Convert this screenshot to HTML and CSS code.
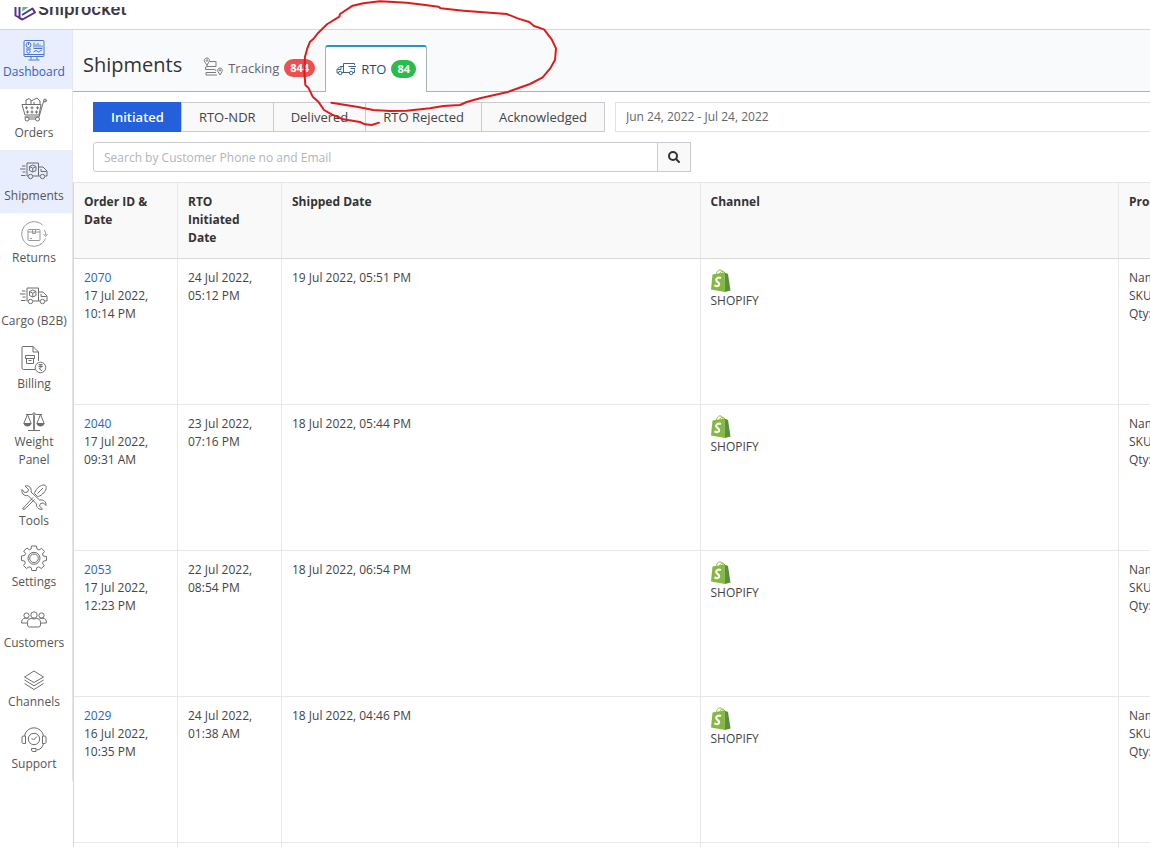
FILE: index.html
```html
<!DOCTYPE html>
<html lang="en">
<head>
    <meta charset="UTF-8">
    <meta name="viewport" content="width=device-width, initial-scale=1.0">
    <title>Shipments - RTO</title>
    <link rel="stylesheet" href="styles.css">
</head>
<body>

    <!-- shared icons -->
    <svg class="sprite" aria-hidden="true">
        <symbol id="icon-truck" viewBox="0 0 28 18">
            <path d="M8 14H7V1H18.500V14M13 14H20M18.500 5H23L27 9V14H25M21 7V9.500H26.500M2 4H5.500M0 7H5.500M2.500 10H5.500M1 13.500H5.500"/>
            <circle cx="10.500" cy="14.500" r="2.200"/>
            <circle cx="22.500" cy="14.500" r="2.200"/>
            <path d="M12.800 3L16 4.500V8.500L12.800 10L9.500 8.500V4.500ZM9.500 4.500L12.800 6.200L16 4.500M12.800 6.200V10"/>
        </symbol>
        <symbol id="icon-shopify" viewBox="0 0 20 23">
            <path d="M5 6C5.500 2.500 7.500 .8 9 .8C11 .8 12 3 12.200 5.500M8.500 6C8.700 3 10.500 1.800 12 2.200C13.200 2.500 13.700 3.500 13.800 5" fill="none" stroke="#95bf46" stroke-width="1"/>
            <path d="M1.500 5.500L13.500 3.500L14 23L0 20.500Z" fill="#84b840"/>
            <path d="M13.500 3.500L17 5L19.500 21.500L14 23Z" fill="#5c8f3b"/>
            <path d="M10 9C8 8 5.200 8.800 5.200 11C5.200 13.200 8.500 13.300 8.200 15.500C8 17.500 5 17.500 3.500 16.200" fill="none" stroke="#fff" stroke-width="2.200"/>
        </symbol>
    </svg>

    <header class="topbar">
        <a class="logo" href="#" aria-label="Shiprocket">
            <svg class="logo-mark" viewBox="0 0 24 14" width="24" height="14">
                <path d="M1.500 0V8.500L6 11M5.500 0V11L8.500 12.500L21 5.500L18.500 1.500L8 8" fill="none" stroke="#56318a" stroke-width="2" stroke-linejoin="round"/>
                <path d="M8.500 0H14.500L8 4.500Z" fill="#45c878"/>
            </svg>
            <span>Shiprocket</span>
        </a>
    </header>

    <div class="layout">
        <nav class="sidebar">
            <a class="nav-item active" href="#">
                <svg class="icon" viewBox="0 0 22 24" width="22" height="24">
                    <rect x="1" y="1.500" width="20" height="16" rx="1"/>
                    <path d="M1 15.500H21M8 17.500V20.500M14 17.500V20.500M5.500 21H16.500M11 3.500V8.500M13 5V8.500M15 4V8.500M17 5.500V8.500M19 6.500V8.500M10.500 9.500H19.500M10.500 13L13 11.500L15.500 13L19 11"/>
                    <circle cx="5.500" cy="6" r="2.500"/>
                    <circle cx="5.500" cy="12.500" r="1.700"/>
                    <path d="M3 10H8M5.500 6V3.500"/>
                </svg>
                <span>Dashboard</span>
            </a>
            <a class="nav-item" href="#">
                <svg class="icon" viewBox="0 1 26 26" width="26" height="26">
                    <path d="M1 7.500H20L18 18H4ZM26 3.500L22.500 4.500L18 20H3.500M5 7V3L8 1.500L10 3V7M10 4L16 1L19 4V7M13 5V7"/>
                    <path d="M4 10.800H7M5.500 9.300V12.300M9.500 10.800H12.500M11 9.300V12.300M15 10.800H18M16.500 9.300V12.300M5 15H8M6.500 13.500V16.500M9.500 15H12.500M11 13.500V16.500M14 15H17M15.500 13.500V16.500"/>
                    <circle cx="6" cy="22" r="2"/>
                    <circle cx="16.500" cy="22" r="2"/>
                    <circle cx="24" cy="3.500" r="1.400"/>
                    <path d="M8 22H14.500"/>
                </svg>
                <span>Orders</span>
            </a>
            <a class="nav-item current" href="#">
                <svg class="icon" viewBox="0 -3 28 28" width="28" height="28"><use href="#icon-truck" width="28" height="18"/></svg>
                <span>Shipments</span>
            </a>
            <a class="nav-item" href="#">
                <svg class="icon pale" viewBox="0 1 28 27" width="28" height="27">
                    <path d="M22.500 4A12.300 12.300 0 1 0 25.500 17.500M24.500 9A12 12 0 0 1 25.800 14M23.500 13L25.800 15.500L27.500 13M20 23.500L21 22.700"/>
                    <rect x="8" y="8.500" width="12" height="11" rx="1"/>
                    <path d="M8 11H20M12.500 8.500V12.500H15.500V8.500M10 17.500H12"/>
                </svg>
                <span>Returns</span>
            </a>
            <a class="nav-item" href="#">
                <svg class="icon" viewBox="0 -3 28 28" width="28" height="28"><use href="#icon-truck" width="28" height="18"/></svg>
                <span>Cargo (B2B)</span>
            </a>
            <a class="nav-item" href="#">
                <svg class="icon" viewBox="0 1 26 28" width="26" height="28">
                    <path d="M14 23.500H2.500Q1 23.500 1 22V1.500Q1 .5 2 .5H12L17.500 6V15M12 .5V6H17.500"/>
                    <path d="M4.500 9.500H13.500V12.500H4.500ZM5.500 12.500V17.500H12.500V12.500M7.500 14.500H10.500"/>
                    <circle cx="19.500" cy="21.500" r="5.300"/>
                    <path d="M17.500 18.700H21.700M17.500 20.500H21.700M18 18.700C21.500 18.700 21.300 22.300 18 22.300L21 25"/>
                </svg>
                <span>Billing</span>
            </a>
            <a class="nav-item" href="#">
                <svg class="icon" viewBox="0 0 22 23" width="22" height="23">
                    <path d="M3 4.500H9.500M12.500 4.500H19M11 5V19M5 20.500H17M4.500 4.500L.8 13.500H8.200ZM17.500 4.500L13.800 13.500H21.200Z"/>
                    <path class="solid" d="M.5 13.500H8.500Q7.500 16.500 4.500 16.500T.5 13.500ZM13.500 13.500H21.500Q20.500 16.500 17.500 16.500T13.500 13.500ZM10.300 6H11.700V20H10.300Z"/>
                    <circle cx="11" cy="4" r="1.200"/>
                </svg>
                <span>Weight<br>Panel</span>
            </a>
            <a class="nav-item" href="#">
                <svg class="icon" viewBox="0 2 26 26" width="26" height="26">
                    <path d="M4 2L7.500 5.500L6.500 8L3.500 8.500L1 5.500C.3 8.500 2.500 12.500 7 11.500L15.500 20C15 23.500 18 26 21.500 25.200L18.500 22L19.500 19.500L22.500 19L25 21.500C25.500 18 23 15.500 18.500 16L10 8C11 4 8 .8 4 2Z"/>
                    <path d="M13.500 9.500C14 6 18.500 1.500 22 1C25 .7 25.800 3 25 5C24 8.500 19.500 12.500 16.500 12.500ZM16.500 9.500L22 4M12 13.500L4.500 21.500L1.500 25L3 25.500L6 23L13.500 15.500"/>
                </svg>
                <span>Tools</span>
            </a>
            <a class="nav-item" href="#">
                <svg class="icon" viewBox="0 2 26 26" width="26" height="26">
                    <path d="M10.500 1H15.500L16 4L18 5L20.700 3.300L23.500 6.500L21.500 9L22.300 11L25.500 11.500V15.500L22.300 16.200L21.500 18.200L23.300 20.800L20.300 23.500L17.800 21.800L15.800 22.600L15.200 25.500H10.800L10.200 22.600L8 21.800L5.500 23.500L2.500 20.500L4.400 18L3.500 16L.5 15.500V11L3.500 10.500L4.500 8.500L2.700 6L6 3L8.300 4.800L10 4Z"/>
                    <circle cx="13" cy="13.300" r="6"/>
                    <circle cx="13" cy="13.300" r="4.300"/>
                </svg>
                <span>Settings</span>
            </a>
            <a class="nav-item" href="#">
                <svg class="icon" viewBox="0 1 26 26" width="26" height="26">
                    <circle cx="13" cy="8" r="3.200"/>
                    <circle cx="5.500" cy="8.500" r="2.600"/>
                    <circle cx="20.500" cy="8.500" r="2.600"/>
                    <path d="M6.500 18V15.500C6.500 12.500 8.500 11.500 10.500 11.500Q13 12.500 15.500 11.500C17.500 11.500 19.500 12.500 19.500 15.500V18Q19.500 20 17.500 20H8.500Q6.500 20 6.500 18ZM6.500 16H.5Q.5 11.500 4 11.200H7.500M19.500 16H25.500Q25.500 11.500 22 11.200H18.500"/>
                </svg>
                <span>Customers</span>
            </a>
            <a class="nav-item" href="#">
                <svg class="icon" viewBox="0 1 22 24" width="22" height="24">
                    <path d="M11 3L20.500 9L11 14.500L1.500 9ZM1.500 12L11 17.800L20.500 12M1.500 15.500L11 21.500L20.500 15.500"/>
                </svg>
                <span>Channels</span>
            </a>
            <a class="nav-item" href="#">
                <svg class="icon" viewBox="0 2 26 27" width="26" height="27">
                    <path d="M3.500 10A9.600 9.600 0 0 1 22.500 10M22.500 17Q21.500 23.500 15.500 24M1 11V16.500Q1 17.500 3 17.500H4.500V10H3Q1 10 1 11ZM25 11V16.500Q25 17.500 23 17.500H21.500V10H23Q25 10 25 11ZM10.500 22.500H15V25.500H12Q10 25.500 10.500 22.500"/>
                    <circle cx="13" cy="13" r="5.700"/>
                    <path d="M10.500 12L12.500 14L16 10.500"/>
                </svg>
                <span>Support</span>
            </a>
        </nav>

        <main class="content">
            <div class="page-head">
                <h1>Shipments</h1>
                <a class="tab" href="#">
                    <svg class="icon" viewBox="0 1 20 20" width="20" height="20">
                        <path d="M4 1A2.500 2.500 0 0 1 6 5L4 8L1.800 5A2.500 2.500 0 0 1 4 1ZM17 11A2.300 2.300 0 0 1 19 14.500L17 18L15 14.500A2.300 2.300 0 0 1 17 11ZM7 4.500H13V9.500H4Q2.500 9.500 2.500 11V12.500H11.500Q13 12.500 13 14M4 9.500V7.500M3 15.500H13M3 18H14M3 15.500V18"/>
                        <circle cx="4" cy="3.500" r=".8"/>
                        <circle cx="17" cy="13.300" r=".7"/>
                    </svg>
                    <span>Tracking</span>
                    <span class="badge red">844</span>
                </a>
                <a class="tab selected" href="#">
                    <svg class="icon" viewBox="0 0 20 14" width="20" height="14">
                        <path d="M7.500 10.500V1.500H18.500V3M18.500 7.500V10.500H17M13.500 10.500H6M7.500 4.500H4L1 7.500V11H2.500M5 4.500V7.500H1.500M12.500 4.500H20M14.500 6.500H19"/>
                        <circle cx="4.200" cy="11" r="1.700"/>
                        <circle cx="15.200" cy="11" r="1.700"/>
                    </svg>
                    <span>RTO</span>
                    <span class="badge green">84</span>
                </a>
            </div>

            <div class="filters">
                <div class="button-group">
                    <button class="on" type="button">Initiated</button>
                    <button type="button">RTO-NDR</button>
                    <button type="button">Delivered</button>
                    <button type="button">RTO Rejected</button>
                    <button type="button">Acknowledged</button>
                </div>
                <input class="date-range" type="text" aria-label="Date range" value="Jun 24, 2022 - Jul 24, 2022">
            </div>

            <form class="search">
                <input type="text" aria-label="Search shipments" placeholder="Search by Customer Phone no and Email">
                <button type="button" aria-label="Search">
                    <svg viewBox="0 0 12 12" width="12" height="12">
                        <circle cx="5" cy="5" r="4" fill="none" stroke="#333" stroke-width="2"/>
                        <path d="M8 8L11 11" stroke="#333" stroke-width="2" stroke-linecap="round"/>
                    </svg>
                </button>
            </form>

            <table class="shipments">
                <colgroup>
                    <col class="col-date">
                    <col class="col-date">
                    <col>
                    <col>
                    <col class="col-product">
                </colgroup>
                <thead>
                    <tr>
                        <th>Order ID &amp; Date</th>
                        <th>RTO<br>Initiated Date</th>
                        <th>Shipped Date</th>
                        <th>Channel</th>
                        <th>Product Details</th>
                    </tr>
                </thead>
                <tbody>
                    <tr>
                        <td><a href="#">2070</a><br>17 Jul 2022, 10:14 PM</td>
                        <td>24 Jul 2022, 05:12 PM</td>
                        <td>19 Jul 2022, 05:51 PM</td>
                        <td><svg class="shopify" width="20" height="23"><use href="#icon-shopify"/></svg>SHOPIFY</td>
                        <td>Name:<br>SKU:<br>Qty:</td>
                    </tr>
                    <tr>
                        <td><a href="#">2040</a><br>17 Jul 2022, 09:31 AM</td>
                        <td>23 Jul 2022, 07:16 PM</td>
                        <td>18 Jul 2022, 05:44 PM</td>
                        <td><svg class="shopify" width="20" height="23"><use href="#icon-shopify"/></svg>SHOPIFY</td>
                        <td>Name:<br>SKU:<br>Qty:</td>
                    </tr>
                    <tr>
                        <td><a href="#">2053</a><br>17 Jul 2022, 12:23 PM</td>
                        <td>22 Jul 2022, 08:54 PM</td>
                        <td>18 Jul 2022, 06:54 PM</td>
                        <td><svg class="shopify" width="20" height="23"><use href="#icon-shopify"/></svg>SHOPIFY</td>
                        <td>Name:<br>SKU:<br>Qty:</td>
                    </tr>
                    <tr>
                        <td><a href="#">2029</a><br>16 Jul 2022, 10:35 PM</td>
                        <td>24 Jul 2022, 01:38 AM</td>
                        <td>18 Jul 2022, 04:46 PM</td>
                        <td><svg class="shopify" width="20" height="23"><use href="#icon-shopify"/></svg>SHOPIFY</td>
                        <td>Name:<br>SKU:<br>Qty:</td>
                    </tr>
                    <tr>
                        <td></td>
                        <td></td>
                        <td></td>
                        <td></td>
                        <td></td>
                    </tr>
                </tbody>
            </table>
        </main>
    </div>

    <!-- hand-drawn marker around the RTO tab -->
    <svg class="marker" viewBox="0 0 1140 405" width="380" height="135" aria-hidden="true">
        <path d="M424 308L500 320L550 330L600 333L650 332L720 325L760 318L810 315L830 306L870 295L910 286L950 277L1020 252L1058 232L1080 206L1095 180L1098 145L1085 118L1062 88L1032 78L1018 66L985 56L950 42L900 38L820 32L752 25L745 20L700 14L650 8L570 4L520 10L488 17L450 42L448 50L412 72L385 98L370 117L360 125L352 145L345 170L343 215L346 255L355 263L368 290L385 305L402 330L425 343L460 358L510 366L525 373L545 375L567 368"/>
    </svg>

</body>
</html>
```

FILE: styles.css
```css
* {
    box-sizing: border-box;
}
body {
    font-family: "Open Sans", Arial, sans-serif;
    font-size: 12px;
    line-height: 18px;
    color: #444;
    background-color: #fff;
    margin: 0;
    height: 100vh;
    overflow: hidden;
    display: flex;
    flex-direction: column;
}
a {
    color: #2f62c4;
    text-decoration: none;
}
.sprite {
    display: none;
}
.icon {
    display: block;
    flex: none;
    overflow: visible;
    fill: none;
    stroke: currentColor;
    stroke-width: 1;
    opacity: 0.85;
}
.icon .solid {
    fill: currentColor;
    stroke: none;
}
.icon.pale {
    opacity: 0.6;
}

/* top bar */
.topbar {
    flex: none;
    height: 30px;
    padding: 7px 14px 0;
    border-bottom: 1px solid #d2d5dc;
}
.logo {
    display: flex;
    align-items: flex-end;
    height: 14px;
    overflow: hidden;
    color: #3c3844;
    font-family: Inter, Arial, sans-serif;
    font-size: 17px;
    font-weight: 600;
    line-height: 24px;
}
.logo-mark {
    align-self: flex-start;
}

/* sidebar */
.layout {
    flex: 1;
    display: flex;
    min-height: 0;
}
.sidebar {
    flex: none;
    align-self: flex-start;
    width: 73px;
    border-right: 1px solid #e6e6ea;
}
.nav-item {
    display: flex;
    flex-direction: column;
    align-items: center;
    padding: 9px 4px 8px 0;
    color: #555;
    text-align: center;
    white-space: nowrap;
}
.nav-item.active {
    background-color: #e8eefe;
    color: #2f62c4;
}
.nav-item.current {
    background-color: #e8eefe;
}

/* page head and tabs */
.content {
    flex: 1;
    min-width: 0;
    overflow: hidden;
}
.page-head {
    display: flex;
    align-items: stretch;
    height: 62px;
    padding: 15px 10px 0;
    background-color: #f9fafc;
    border-bottom: 1px solid #abb0b5;
}
h1 {
    margin: 0 11px 0 0;
    font-size: 20px;
    font-weight: 400;
    line-height: 40px;
    color: #333;
}
.tab {
    display: flex;
    align-items: center;
    gap: 5px;
    padding: 0 10px;
    color: #666;
    font-size: 13px;
}
.tab.selected {
    margin-bottom: -1px;
    padding-bottom: 2px;
    background-color: #fff;
    border: 1px solid #abb0b5;
    border-top: 2px solid #2596be;
    border-bottom: 0;
    border-radius: 3px 3px 0 0;
    color: #1f4a75;
}
.badge {
    padding: 0 6px;
    border-radius: 9px;
    color: #fff;
    font-size: 11px;
    font-weight: 700;
}
.red {
    background-color: #ed5050;
}
.green {
    background-color: #28bd4b;
}

/* filters */
.filters {
    display: flex;
    gap: 10px;
    padding: 10px 0 0 20px;
}
.button-group {
    display: flex;
}
button {
    font: inherit;
    cursor: pointer;
}
.button-group button {
    height: 30px;
    margin-left: -1px;
    padding: 0 17px;
    background-color: #f9f9f9;
    border: 1px solid #c8cbd0;
    color: #444;
    font-size: 13px;
}
.button-group .on {
    margin-left: 0;
    background-color: #245fdc;
    border-color: #245fdc;
    color: #fff;
    font-weight: 600;
}
input {
    height: 30px;
    padding: 0 10px;
    border: 1px solid #c8cbd0;
    font: inherit;
    color: #666;
}
.date-range {
    flex: 1;
    min-width: 0;
    padding-bottom: 1px;
    border-color: #dfe1e5;
    border-right: 0;
}
.search {
    display: flex;
    width: 55.5%;
    margin: 10px 0 10px 20px;
}
.search input {
    flex: 1;
    border-radius: 3px 0 0 3px;
}
.search input::placeholder {
    color: #b0b4be;
}
.search button {
    display: flex;
    align-items: center;
    justify-content: center;
    width: 34px;
    height: 30px;
    margin-left: -1px;
    background-color: #f9f9f9;
    border: 1px solid #c8cbd0;
}

/* table */
.shipments {
    width: 100%;
    table-layout: fixed;
    border-collapse: separate;
    border-spacing: 0;
    border-top: 1px solid #e6e6e6;
    border-left: 1px solid #d6d6d6;
}
.col-date {
    width: 104px;
}
.col-product {
    width: 31px;
}
th,
td {
    padding: 10px 10px 9px;
    border-right: 1px solid #e8e8e8;
    border-bottom: 1px solid #e8e8e8;
    text-align: left;
    vertical-align: top;
}
th {
    height: 76px;
    background-color: #f9f9f9;
    border-bottom-color: #d8d8d8;
    color: #333;
    font-weight: 700;
}
td {
    height: 146px;
}
th:nth-child(2) {
    padding-right: 20px;
}
th:last-child,
td:last-child {
    border-right: 0;
    white-space: nowrap;
}
.shopify {
    display: block;
}

.marker {
    position: absolute;
    top: 0;
    left: 190px;
    pointer-events: none;
    fill: none;
    stroke: #e01b1b;
    stroke-width: 6;
    stroke-linecap: round;
    stroke-linejoin: round;
}
```
